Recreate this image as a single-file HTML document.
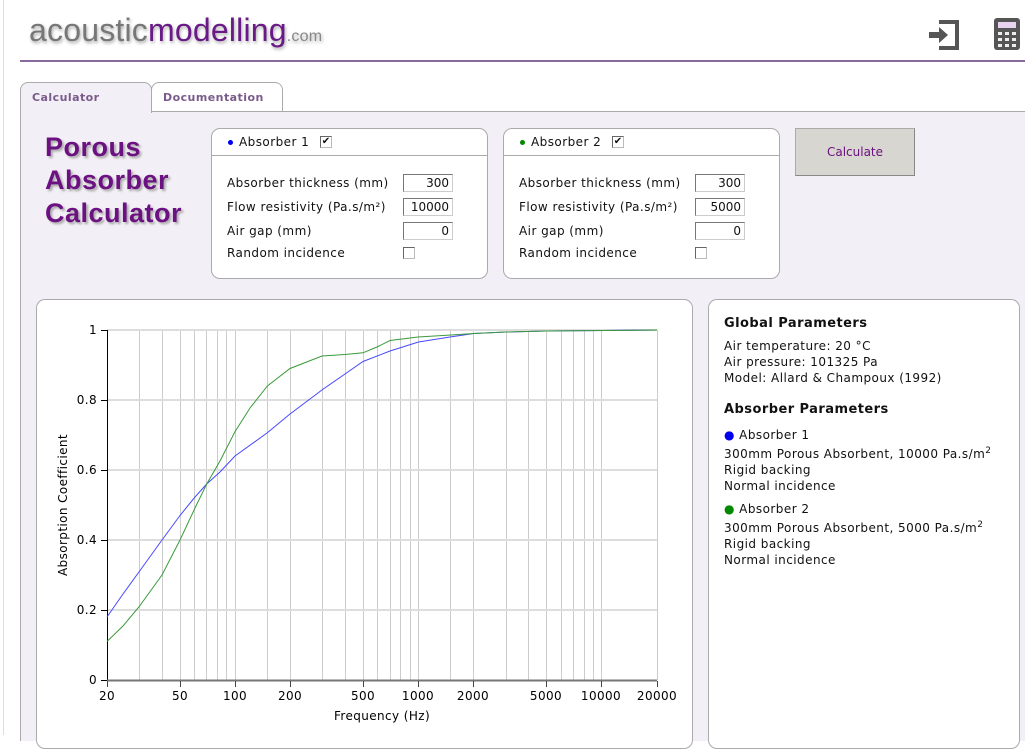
<!DOCTYPE html>
<html><head><meta charset="utf-8"><style>
*{margin:0;padding:0;box-sizing:border-box}
body{width:1025px;height:735px;overflow:hidden;background:#fff;font-family:"DejaVu Sans","Liberation Sans",sans-serif;font-size:12px;color:#111;position:relative;letter-spacing:0.45px}
.a{position:absolute}
.box{position:absolute;background:#fff;border:1px solid #aaa;border-radius:9px}
.inp{position:absolute;width:50px;height:18px;border:1px solid #777;border-right-color:#ccc;border-bottom-color:#ccc;background:#fff;text-align:right;padding-right:3px;font-size:12px;line-height:16px;letter-spacing:0}
.cb{position:absolute;width:12px;height:12px;border:1px solid #666;border-right-color:#bbb;border-bottom-color:#bbb;background:#fff;letter-spacing:0}
.lbl{position:absolute;white-space:nowrap}
</style></head><body>
<div class="a" style="left:3px;top:0;width:1px;height:735px;background:#ddd"></div>
<div class="a" style="left:29px;top:12px;font-family:'Liberation Sans',sans-serif;font-size:32px;letter-spacing:0.2px;text-shadow:1px 2px 3px #aaa"><span style="color:#777">acoustic</span><span style="color:#6a1a86">modelling</span><span style="color:#888;font-size:16px">.com</span></div>
<div class="a" style="left:20px;top:60px;width:1005px;height:2px;background:#8a6a98"></div>
<svg class="a" style="left:928px;top:18px" width="34" height="34" viewBox="0 0 34 34"><path d="M11 2h20v30H11v-4h16V6H11z" fill="#555"/><path d="M1 14h10V9l9 8-9 8v-5H1z" fill="#555"/></svg>
<svg class="a" style="left:994px;top:18px" width="26" height="32" viewBox="0 0 26 32"><rect x="0" y="0" width="26" height="32" rx="3" fill="#555"/><rect x="4" y="4" width="18" height="6" fill="#e9d2f0"/><g fill="#eee"><rect x="4" y="14" width="4" height="3"/><rect x="11" y="14" width="4" height="3"/><rect x="18" y="14" width="4" height="3"/><rect x="4" y="20" width="4" height="3"/><rect x="11" y="20" width="4" height="3"/><rect x="18" y="20" width="4" height="3"/><rect x="4" y="26" width="4" height="3"/><rect x="11" y="26" width="4" height="3"/><rect x="18" y="26" width="4" height="3"/></g></svg>
<div class="a" style="left:20px;top:111px;width:1010px;height:630px;background:#f3eff6;border-left:1px solid #aaa;border-top:1px solid #aaa"></div>
<div class="a" style="left:20px;top:82px;width:132px;height:31px;background:#f3eff6;border:1px solid #aaa;border-bottom:none;border-radius:8px 8px 0 0;font-weight:bold;font-size:11px;color:#7a5a8a;padding:8px 0 0 11px">Calculator</div>
<div class="a" style="left:151px;top:82px;width:132px;height:29px;background:#fff;border:1px solid #aaa;border-bottom:none;border-radius:8px 8px 0 0;font-weight:bold;font-size:11px;color:#7a5a8a;padding:8px 0 0 11px">Documentation</div>
<div class="a" style="left:45px;top:131px;font-family:'Liberation Sans',sans-serif;font-weight:bold;font-size:27px;line-height:33px;letter-spacing:0.5px;color:#6c1181;text-shadow:2px 2px 2px #aaa">Porous<br>Absorber<br>Calculator</div>
<div class="box" style="left:211px;top:128px;width:277px;height:151px"></div>
<div class="a" style="left:212px;top:155px;width:275px;height:1px;background:#aaa"></div>
<div class="a" style="left:228px;top:140px;width:5px;height:5px;border-radius:50%;background:#0000ee"></div>
<div class="lbl" style="left:239px;top:135px">Absorber 1</div>
<div class="cb" style="left:320px;top:136px;font-size:10px;line-height:10px;text-align:center">✔</div>
<div class="lbl" style="left:227px;top:176px">Absorber thickness (mm)</div>
<div class="lbl" style="left:227px;top:200px">Flow resistivity (Pa.s/m²)</div>
<div class="lbl" style="left:227px;top:224px">Air gap (mm)</div>
<div class="lbl" style="left:227px;top:246px">Random incidence</div>
<div class="inp" style="left:403px;top:174px">300</div>
<div class="inp" style="left:403px;top:198px">10000</div>
<div class="inp" style="left:403px;top:222px">0</div>
<div class="cb" style="left:403px;top:247px"></div>
<div class="box" style="left:503px;top:128px;width:277px;height:151px"></div>
<div class="a" style="left:504px;top:155px;width:275px;height:1px;background:#aaa"></div>
<div class="a" style="left:520px;top:140px;width:5px;height:5px;border-radius:50%;background:#008800"></div>
<div class="lbl" style="left:531px;top:135px">Absorber 2</div>
<div class="cb" style="left:612px;top:136px;font-size:10px;line-height:10px;text-align:center">✔</div>
<div class="lbl" style="left:519px;top:176px">Absorber thickness (mm)</div>
<div class="lbl" style="left:519px;top:200px">Flow resistivity (Pa.s/m²)</div>
<div class="lbl" style="left:519px;top:224px">Air gap (mm)</div>
<div class="lbl" style="left:519px;top:246px">Random incidence</div>
<div class="inp" style="left:695px;top:174px">300</div>
<div class="inp" style="left:695px;top:198px">5000</div>
<div class="inp" style="left:695px;top:222px">0</div>
<div class="cb" style="left:695px;top:247px"></div>
<div class="a" style="left:795px;top:128px;width:120px;height:48px;background:#d8d6d0;border:1px solid #aaa;border-right-color:#888;border-bottom-color:#888;color:#6c1181;text-align:center;line-height:46px;letter-spacing:0">Calculate</div>
<div class="box" style="left:36px;top:299px;width:657px;height:450px"></div>
<svg class="a" style="left:0;top:0" width="1025" height="735">
<g stroke="#ccc" stroke-width="1">
<path d="M139.5 330V680M162.5 330V680M180.5 330V680M194.5 330V680M206.5 330V680M217.5 330V680M226.5 330V680M235.5 330V680M267.5 330V680M290.5 330V680M322.5 330V680M345.5 330V680M363.5 330V680M377.5 330V680M390.5 330V680M400.5 330V680M410.5 330V680M418.5 330V680M450.5 330V680M473.5 330V680M506.5 330V680M528.5 330V680M546.5 330V680M561.5 330V680M573.5 330V680M584.5 330V680M593.5 330V680M601.5 330V680M657.5 330V680"/>
</g>
<g stroke="#ddd" stroke-width="2"><path d="M107 610H657M107 540H657M107 470H657M107 400H657M107 330H657"/></g>
<path d="M107.5 330V681" stroke="#000"/>
<path d="M107 680.5H657" stroke="#777" stroke-width="2"/>
<g stroke="#000"><path d="M101 330.5h6M101 400.5h6M101 470.5h6M101 540.5h6M101 610.5h6M101 680.5h6"/></g>
<g stroke="#444"><path d="M107.5 681v6M180.5 681v6M235.5 681v6M290.5 681v6M363.5 681v6M418.5 681v6M473.5 681v6M546.5 681v6M601.5 681v6M657.5 681v6"/></g>
<polyline fill="none" stroke="#4848ff" stroke-width="1" points="107,617 123,594 139.3,571.5 162,540 180,515.5 195,497 206.7,484 220,472 235,456 267,433 290,414 322.6,389.5 345,374 363,361.5 390,351 418.5,342 450,337 473.7,333.5 506,332 546,331 601,330.5 657,330"/>
<polyline fill="none" stroke="#3a9a3a" stroke-width="1" points="107,641.5 123,626 139.3,606.5 162,575 180,540 195,508 206.7,484 220,461 235.1,431.5 250,408 267.4,386 290,368.5 322,356 345,354.5 363,352.8 377,347 390,340.5 418,337 451,335 473.7,333.5 506,332 546,331 657,330"/>
<g font-family="DejaVu Sans,sans-serif" font-size="12" fill="#000" text-anchor="end" letter-spacing="0.4">
<text x="97" y="334">1</text><text x="97" y="404">0.8</text><text x="97" y="474">0.6</text><text x="97" y="544">0.4</text><text x="97" y="614">0.2</text><text x="97" y="684">0</text>
</g>
<g font-family="DejaVu Sans,sans-serif" font-size="12" fill="#000" text-anchor="middle" letter-spacing="0.4">
<text x="107" y="700">20</text><text x="180" y="700">50</text><text x="235" y="700">100</text><text x="290" y="700">200</text><text x="363" y="700">500</text><text x="418" y="700">1000</text><text x="473" y="700">2000</text><text x="546" y="700">5000</text><text x="601" y="700">10000</text><text x="657" y="700">20000</text>
<text x="382" y="720">Frequency (Hz)</text>
<text transform="translate(67 505) rotate(-90)">Absorption Coefficient</text>
</g>
</svg>
<div class="box" style="left:708px;top:299px;width:312px;height:450px"></div>
<div class="a" style="left:724px;top:316px;line-height:16px;font-size:12px">
<div style="font-weight:bold;font-size:13px">Global Parameters</div>
<div style="margin-top:6px">Air temperature: 20 °C<br>Air pressure: 101325 Pa<br>Model: Allard &amp; Champoux (1992)</div>
<div style="font-weight:bold;font-size:13px;margin-top:16px">Absorber Parameters</div>
<div style="margin-top:9px"><span style="color:#0000ee">●</span> Absorber 1<br>300mm Porous Absorbent, 10000 Pa.s/m<sup style="font-size:9px">2</sup><br>Rigid backing<br>Normal incidence</div>
<div style="margin-top:7px"><span style="color:#008800">●</span> Absorber 2<br>300mm Porous Absorbent, 5000 Pa.s/m<sup style="font-size:9px">2</sup><br>Rigid backing<br>Normal incidence</div>
</div>
</body></html>
